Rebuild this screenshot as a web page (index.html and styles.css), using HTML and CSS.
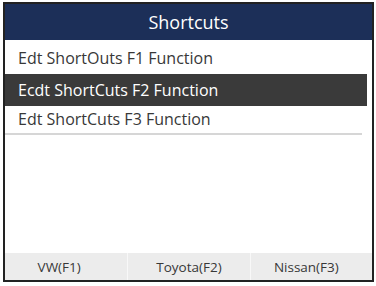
FILE: index.html
```html
<!DOCTYPE html>
<html lang="en">
<head>
  <meta charset="UTF-8">
  <title>Shortcuts</title>
  <link rel="stylesheet" href="styles.css">
</head>
<body>

<div class="screen">
  <!-- Title bar -->
  <div class="title-bar">Shortcuts</div>

  <!-- Menu list -->
  <div class="menu">
    <div class="menu-item">Edt ShortOuts F1 Function</div>
    <div class="menu-item selected">Ecdt ShortCuts F2 Function</div>
    <div class="menu-item last">Edt ShortCuts F3 Function</div>
  </div>

  <!-- Function keys -->
  <div class="key-bar">
    <div class="key key-left">VW(F1)</div>
    <div class="key">Toyota(F2)</div>
    <div class="key key-right">Nissan(F3)</div>
  </div>
</div>

</body>
</html>
```

FILE: styles.css
```css
body {
  margin: 0;
  background: #fff;
  font-family: 'Open Sans', 'Noto Sans', sans-serif;
}

.screen {
  margin: 2px 0 0 3px;
  width: 367px;
  height: 276px;
  border: 2px solid #222;
  display: flex;
  flex-direction: column;
  background: #fff;
}

.title-bar {
  height: 36px;
  background: #1c2f58;
  color: #fff;
  font-size: 18px;
  display: flex;
  align-items: center;
  justify-content: center;
}

.menu {
  flex: 1;
  padding-top: 2px;
  padding-right: 5px;
}

.menu-item {
  height: 32px;
  line-height: 32px;
  padding-left: 13px;
  font-size: 16px;
  color: #383838;
}

.menu-item.selected {
  background: #3a3a3a;
  color: #fff;
}

.menu-item.last {
  height: 27px;
  line-height: 26px;
  border-bottom: 2px solid #d6d6d6;
  margin-right: 5px;
}

.key-bar {
  height: 27px;
  display: grid;
  grid-template-columns: repeat(3, 1fr);
  background: #ececec;
}

.key {
  display: flex;
  align-items: center;
  justify-content: center;
  font-size: 13.5px;
  color: #383838;
  border-left: 1px solid #f8f8f8;
}

.key:first-child {
  border-left: none;
}

.key-left {
  padding-right: 14px;
}

.key-right {
  padding-right: 10px;
}
```
